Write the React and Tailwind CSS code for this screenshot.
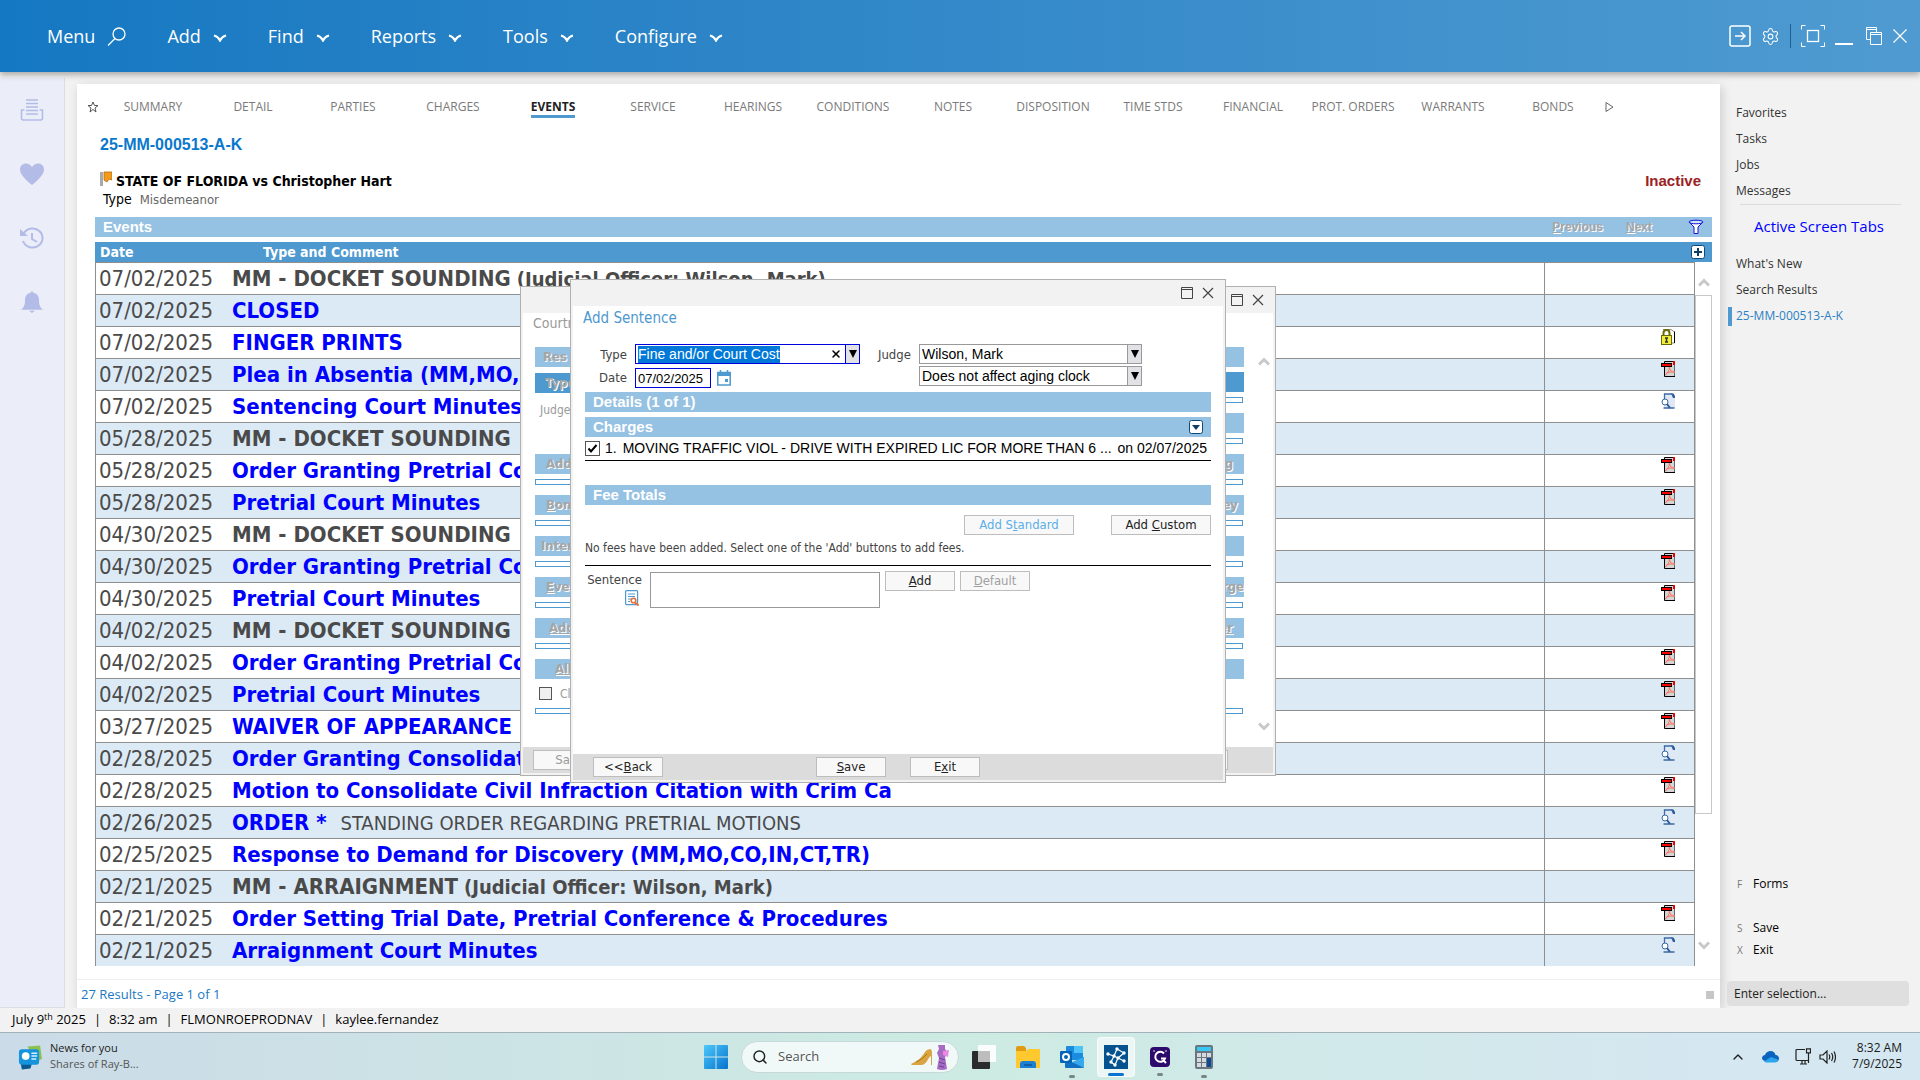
import React, { useEffect, useRef } from "react";
import { ChevronUp, Search, Settings, X } from "lucide-react";

const events = [
	{ date: "07/02/2025", text: "MM - DOCKET SOUNDING", officer: "(Judicial Officer: Wilson, Mark)" },
	{ date: "07/02/2025", text: "CLOSED", link: true },
	{ date: "07/02/2025", text: "FINGER PRINTS", link: true, icon: "lock" },
	{ date: "07/02/2025", text: "Plea in Absentia (MM,MO,CO", link: true, icon: "pdf" },
	{ date: "07/02/2025", text: "Sentencing Court Minutes", link: true, icon: "view" },
	{ date: "05/28/2025", text: "MM - DOCKET SOUNDING" },
	{ date: "05/28/2025", text: "Order Granting Pretrial Co", link: true, icon: "pdf" },
	{ date: "05/28/2025", text: "Pretrial Court Minutes", link: true, icon: "pdf" },
	{ date: "04/30/2025", text: "MM - DOCKET SOUNDING" },
	{ date: "04/30/2025", text: "Order Granting Pretrial Co", link: true, icon: "pdf" },
	{ date: "04/30/2025", text: "Pretrial Court Minutes", link: true, icon: "pdf" },
	{ date: "04/02/2025", text: "MM - DOCKET SOUNDING" },
	{ date: "04/02/2025", text: "Order Granting Pretrial Co", link: true, icon: "pdf" },
	{ date: "04/02/2025", text: "Pretrial Court Minutes", link: true, icon: "pdf" },
	{ date: "03/27/2025", text: "WAIVER OF APPEARANCE", link: true, icon: "pdf" },
	{ date: "02/28/2025", text: "Order Granting Consolidat", link: true, icon: "view" },
	{ date: "02/28/2025", text: "Motion to Consolidate Civil Infraction Citation with Crim Ca", link: true, icon: "pdf" },
	{ date: "02/26/2025", text: "ORDER *", link: true, note: "STANDING ORDER REGARDING PRETRIAL MOTIONS", icon: "view" },
	{ date: "02/25/2025", text: "Response to Demand for Discovery (MM,MO,CO,IN,CT,TR)", link: true, icon: "pdf" },
	{ date: "02/21/2025", text: "MM - ARRAIGNMENT", officer: "(Judicial Officer: Wilson, Mark)" },
	{ date: "02/21/2025", text: "Order Setting Trial Date, Pretrial Conference & Procedures", link: true, icon: "pdf" },
	{ date: "02/21/2025", text: "Arraignment Court Minutes", link: true, icon: "view" },
];

const tabs = [
	"SUMMARY", "DETAIL", "PARTIES", "CHARGES", "EVENTS", "SERVICE", "HEARINGS", "CONDITIONS",
	"NOTES", "DISPOSITION", "TIME STDS", "FINANCIAL", "PROT. ORDERS", "WARRANTS", "BONDS",
];

function PdfIcon() {
	return (
		<svg width="14" height="16" viewBox="0 0 14 16" aria-label="PDF">
			<path d="M3.5 .5H14V15.5H3.5z" fill="#d4d4d4" stroke="#000" />
			<rect x="12" y="0" width="2" height="4" fill="#e00" />
			<rect x=".5" y="2.5" width="10" height="3" fill="#f00" stroke="#000" />
			<path d="M4 14c3-2 4.500-5 4.500-8 0 3 2 5.500 5.500 5M5 12.500c3-1.500 6-2 9-1.500" fill="none" stroke="#ff6f61" />
		</svg>
	);
}

function ViewIcon() {
	return (
		<svg width="14" height="16" viewBox="0 0 14 16" aria-label="View">
			<path d="M3 1h9l2 3v11H3z" fill="#dfe8f4" />
			<path d="M3.500 6V1h8M2.500 15h11" fill="none" stroke="#3c6aa3" strokeWidth="1.300" />
			<path d="M10 .5h2.500L14 3v2h-2z" fill="#2d5f9e" />
			<circle cx="4" cy="9" r="3" fill="#fff" stroke="#3c6aa3" />
			<path d="M6 11l3 4" stroke="#2d5f9e" strokeWidth="2" />
		</svg>
	);
}

function LockIcon() {
	return (
		<svg width="14" height="16" viewBox="0 0 14 16" aria-label="Locked">
			<path d="M2 .5h8l3.500 2.500v11H8" fill="#fff" stroke="#888" />
			<path d="M13.500 2.500V14" stroke="#000" />
			<path d="M2.500 7V4a3 3 0 0 1 6 0v3" fill="none" stroke="#6b6b00" strokeWidth="2" />
			<rect x=".5" y="6.500" width="10" height="9" fill="#f1ee3b" stroke="#6b6b00" />
			<path d="M4 9h3M5.500 9v4M4 13h3" stroke="#333" strokeWidth="1.500" />
		</svg>
	);
}

const rowIcons = { pdf: <PdfIcon />, view: <ViewIcon />, lock: <LockIcon /> };

function MenuButton({ label }) {
	return (
		<button className="flex items-center gap-3">
			{label}
			<svg width="14" height="8" viewBox="0 0 14 8" fill="none" stroke="#fff" strokeWidth="2.200" className="mt-1">
				<path d="M1 1.500Q5 2.500 7 6.500Q9 2.500 13 1.500" />
			</svg>
		</button>
	);
}

function TopBar() {
	return (
		<header className="relative z-10 flex h-[72px] shrink-0 items-center justify-between bg-linear-to-r from-[#1478c2] via-[#3389c9] to-[#4f9bd1] pr-3 pl-[47px] text-[18px] text-white shadow-[0_3px_6px_rgba(0,0,0,0.3)]">
			<nav className="flex items-center gap-[41px]">
				<button className="flex items-center gap-3">
					Menu
					<svg width="19" height="19" viewBox="0 0 19 19" fill="none" stroke="#fff" strokeWidth="1.300">
						<circle cx="12" cy="7" r="6" />
						<path d="M8 11.500L1 18.500" />
					</svg>
				</button>
				<MenuButton label="Add" />
				<MenuButton label="Find" />
				<MenuButton label="Reports" />
				<MenuButton label="Tools" />
				<MenuButton label="Configure" />
			</nav>
			<div className="flex items-center gap-[10px]">
				<button aria-label="Sign out">
					<svg width="22" height="22" viewBox="0 0 22 22" fill="none" stroke="#fff" strokeWidth="1.500">
						<rect x="1" y="1" width="20" height="20" rx="2" />
						<path d="M6 11h10M12 7l4 4-4 4" />
					</svg>
				</button>
				<button aria-label="Settings">
					<Settings size={19} strokeWidth={1.3} />
				</button>
				<div className="h-6 w-px bg-[#1c5f99]" />
				<button aria-label="Full screen">
					<svg width="24" height="22" viewBox="0 0 24 22" fill="none" stroke="#fff">
						<path d="M.5 4.500v-4h4M19.500.5h4v4M23.500 17.500v4h-4M4.500 21.500h-4v-4" />
						<rect x="6.500" y="5.500" width="11" height="11" strokeWidth="1.300" />
					</svg>
				</button>
				<button aria-label="Minimize">
					<svg width="18" height="18" viewBox="0 0 18 18">
						<rect y="16" width="18" height="2" fill="#fff" />
					</svg>
				</button>
				<button aria-label="Restore" className="ml-[3px]">
					<svg width="16" height="18" viewBox="0 0 16 18" fill="none" stroke="#fff">
						<path d="M4 12.500H.5V.5h10V5M.5 2.500h10" />
						<path d="M4.500 5.500h11v12h-11zM4.500 7.500h11" />
					</svg>
				</button>
				<button aria-label="Close">
					<svg width="16" height="16" viewBox="0 0 16 16" stroke="#fff" strokeWidth="1.200">
						<path d="M1.500 1.500l13 13M14.500 1.500l-13 13" />
					</svg>
				</button>
			</div>
		</header>
	);
}

function LeftRail() {
	return (
		<aside className="mt-[6px] flex w-[65px] shrink-0 flex-col items-center gap-[42px] border-r border-b border-[#dcdde3] bg-[#ebeef8] pt-[21px] text-[#b3bce6]">
			<button aria-label="Documents">
				<svg width="24" height="22" viewBox="0 0 24 22" fill="none" stroke="currentColor" strokeWidth="1.600">
					<path d="M6 1h12M6 4.500h12M6 8h12M6 11.500h12M6 15h12" />
					<path d="M4.500 11H1.500v8q0 2 2 2h17q2 0 2-2v-8h-3" />
				</svg>
			</button>
			<button aria-label="Favorites">
				<svg width="26" height="22" viewBox="0 0 26 22" fill="currentColor">
					<path d="M13 22C8 18 1 12 1 6.500 1 3 3.500.5 7 .5c2.500 0 4.500 1.200 6 3.500C14.500 1.700 16.500.5 19 .5c3.500 0 6 2.500 6 6C25 12 18 18 13 22z" />
				</svg>
			</button>
			<button aria-label="History">
				<svg width="26" height="22" viewBox="0 0 26 22" fill="none" stroke="currentColor" strokeWidth="2">
					<path d="M5 6a10 9.500 0 1 1-1 8" />
					<path d="M1 2v7h8z" fill="currentColor" stroke="none" />
					<path d="M13 6v6l5 3" />
				</svg>
			</button>
			<button aria-label="Notifications">
				<svg width="22" height="22" viewBox="0 0 22 24" preserveAspectRatio="none" fill="currentColor">
					<path d="M11 0l1.500 2c4 1 5.500 4 5.500 8 0 6 1.500 8 4 10.500H0C2.500 18 4 16 4 10c0-4 1.500-7 5.500-8zM8 21.500h6l-3 2.500z" />
				</svg>
			</button>
		</aside>
	);
}

function ScrollArrow({ down }) {
	return (
		<svg width="12" height="9" viewBox="0 0 12 9" fill="none" stroke="#c8c8c8" strokeWidth="3">
			<path d={down ? "M1 1.500L6 6.500L11 1.500" : "M1 7.500L6 2.500L11 7.500"} />
		</svg>
	);
}

function EventsTable() {
	return (
		<table className="w-full table-fixed border-separate border-spacing-0 font-['DejaVu_Sans_Condensed','DejaVu_Sans',sans-serif] text-[#4a4a4a]">
			<thead>
				<tr className="h-5 bg-[#4e99cf] text-left text-[14px] leading-5 text-white">
					<th className="w-[137px] p-0 pl-[5px]">Date</th>
					<th className="p-0 pl-[31px]">Type and Comment</th>
					<th className="w-[151px] p-0" />
					<th className="w-[17px] p-0">
						<button aria-label="Add event" className="relative -left-1 block">
							<PlusBox />
						</button>
					</th>
				</tr>
			</thead>
			<tbody>
				{events.map((e, i) => (
					<tr key={i} className={i % 2 ? "h-8 bg-[#dceaf6]" : "h-8 bg-white"}>
						<td className="border-t border-l border-[#8f8f8f] p-0 pl-[3px] text-[22px] leading-7">{e.date}</td>
						<td className="overflow-hidden border-t border-[#8f8f8f] p-0 text-[22px] leading-7 whitespace-nowrap">
							{e.link ? (
								<a href="#event" className="font-bold text-[#0000ff]">{e.text}</a>
							) : (
								<b>{e.text}</b>
							)}
							{e.officer && <b className="ml-[6px] text-[20px]">{e.officer}</b>}
							{e.note && <span className="ml-[14px] text-[20px]">{e.note}</span>}
						</td>
						<td className="border-x border-t border-[#8f8f8f] p-0 align-top">
							<div className="flex justify-end pt-[2px] pr-[19px]">{rowIcons[e.icon]}</div>
						</td>
						{i === 0 && (
							<td rowSpan={events.length} className="h-px bg-white p-0 align-top">
								<div className="flex h-full flex-col items-center justify-between">
									<div className="flex h-[552px] w-full flex-col items-center">
										<div className="flex h-[33px] items-center pt-2">
											<ScrollArrow />
										</div>
										<div className="w-full flex-1 border border-[#c8c8c8]" />
									</div>
									<div className="pb-4">
										<ScrollArrow down />
									</div>
								</div>
							</td>
						)}
					</tr>
				))}
			</tbody>
		</table>
	);
}

function PlusBox() {
	return (
		<svg width="14" height="14" viewBox="0 0 14 14">
			<rect x=".5" y=".5" width="13" height="13" rx="2" fill="#fff" stroke="#0d4a7a" />
			<path d="M7 3v8M3 7h8" stroke="#0d3e68" strokeWidth="2" />
		</svg>
	);
}

function CaseCard() {
	return (
		<main className="mt-3 ml-3 flex min-w-0 flex-1 flex-col overflow-hidden bg-white shadow-[2px_3px_10px_rgba(0,0,0,0.16)]">
			<nav className="flex h-[46px] items-center pl-[10px] text-[12px] text-[#7a7a7a]">
				<svg width="12" height="12" viewBox="0 0 24 24" fill="none" stroke="#555" strokeWidth="2">
					<path d="M12 2l3 7h7l-6 5 2 8-6-5-6 5 2-8-6-5h7z" />
				</svg>
				<div className="ml-1 flex">
					{tabs.map((t) => (
						<a key={t} href="#tab" className="flex w-[100px] justify-center whitespace-nowrap">
							{t === "EVENTS" ? (
								<span className="border-b-[3px] border-[#4e99cf] pt-[3px] leading-4 font-bold text-[#222]">{t}</span>
							) : (
								<span className="pt-[3px] leading-4">{t}</span>
							)}
						</a>
					))}
				</div>
				<svg width="9" height="12" viewBox="0 0 9 12" fill="none" stroke="#666" className="ml-[2px]">
					<path d="M1 1.500L8 6L1 10.500z" />
				</svg>
			</nav>
			<section className="flex flex-1 flex-col pr-2 pl-[18px]">
				<h1 className="mt-[5px] pl-[5px] font-['Liberation_Sans',sans-serif] text-[16px] leading-5 font-bold text-[#0a78cc]">
					25-MM-000513-A-K
				</h1>
				<div className="mt-4 flex justify-between pr-[11px] pl-[5px]">
					<div>
						<div className="flex gap-1 font-['DejaVu_Sans_Condensed','DejaVu_Sans',sans-serif] text-[14px] leading-5 font-bold text-black">
							<svg width="12" height="15" viewBox="0 0 12 15">
								<rect x="0" y="1" width="3" height="14" fill="#a9a9a9" />
								<path d="M4 1h8v8l-3-1-2 3-3-2z" fill="#f29a1c" stroke="#b56a08" strokeWidth=".8" />
							</svg>
							STATE OF FLORIDA vs Christopher Hart
						</div>
						<div className="flex items-baseline gap-2 pl-[3px] font-['DejaVu_Sans_Condensed','DejaVu_Sans',sans-serif] text-[14px] leading-4">
							<span className="text-black">Type</span>
							<span className="text-[13px] text-[#666]">Misdemeanor</span>
						</div>
					</div>
					<div className="font-['Liberation_Sans',sans-serif] text-[15px] leading-5 font-bold text-[#9c2222]">Inactive</div>
				</div>
				<div className="mt-[9px] flex h-5 items-center justify-between bg-[#95c1e3] pr-2 pl-2 font-['Liberation_Sans',sans-serif] text-[15px] font-bold text-white">
					<h2>Events</h2>
					<div className="flex items-center text-[12px] text-[#a6a6a6] [text-shadow:1px_1px_0_#fff]">
						<span className="mr-[23px]"><u>P</u>revious</span>
						<span className="mr-9"><u>N</u>ext</span>
						<svg width="16" height="16" viewBox="0 0 16 16" fill="#fff" stroke="#1414d8">
							<path d="M1 3l5 5v6.500h4V8l5-5z" />
							<ellipse cx="8" cy="3" rx="7" ry="1.800" fill="#cfe6f6" />
						</svg>
					</div>
				</div>
				<div className="mt-[5px] flex-1 overflow-hidden">
					<EventsTable />
				</div>
			</section>
			<footer className="flex h-[29px] items-center justify-between border-t border-[#eee] pt-px pr-[6px] pl-1 text-[13px] text-[#1b78c2]">
				<span>27 Results - Page 1 of 1</span>
				<span className="h-2 w-2 bg-[#c6c6c6]" />
			</footer>
		</main>
	);
}

function RightRail() {
	return (
		<aside className="flex w-[200px] shrink-0 flex-col pt-7 pr-[11px] pl-[7px] text-[12px] text-[#333]">
			<nav className="flex flex-col pl-[9px] leading-[26px]">
				<a href="#favorites">Favorites</a>
				<a href="#tasks">Tasks</a>
				<a href="#jobs">Jobs</a>
				<a href="#messages">Messages</a>
			</nav>
			<hr className="mr-2 ml-[13px] border-[#dcdcdc]" />
			<h2 className="mt-[9px] ml-[27px] text-[15px] leading-6 whitespace-nowrap text-[#0000ff]">Active Screen Tabs</h2>
			<nav className="mt-[13px] flex flex-col leading-[26px]">
				<a href="#new" className="pl-[9px]">What's New</a>
				<a href="#results" className="pl-[9px]">Search Results</a>
				<a href="#case" className="flex items-center gap-1 pl-px text-[#2a80c4]">
					<span className="h-[19px] w-1 bg-[#4e99cf]" />
					25-MM-000513-A-K
				</a>
			</nav>
			<div className="mt-auto flex flex-col pl-[10px] leading-[22px] text-black">
				<a href="#forms" className="flex"><span className="w-4 text-[10px] text-[#777]">F</span>Forms</a>
				<a href="#save" className="mt-[22px] flex"><span className="w-4 text-[10px] text-[#777]">S</span>Save</a>
				<a href="#exit" className="flex"><span className="w-4 text-[10px] text-[#777]">X</span>Exit</a>
			</div>
			<input
				aria-label="Enter selection"
				placeholder="Enter selection..."
				className="mt-5 mb-[2px] h-[25px] w-full rounded bg-[#dfdfdf] px-[7px] text-[12px] placeholder:text-[#222]"
			/>
		</aside>
	);
}

function WindowBar() {
	return (
		<div className="flex h-[26px] items-center justify-end gap-[9px] bg-[#f2f2f2] pr-[11px]">
			<button aria-label="Maximize">
				<svg width="12" height="12" viewBox="0 0 12 12" fill="none" stroke="#444">
					<path d="M.5.5h11v11H.5zM.5 2.500h11" />
				</svg>
			</button>
			<button aria-label="Close window">
				<svg width="12" height="12" viewBox="0 0 12 12" stroke="#444" strokeWidth="1.200">
					<path d="M1 1l10 10M11 1L1 11" />
				</svg>
			</button>
		</div>
	);
}

function Bar({ children, dark }) {
	return (
		<div
			className={
				dark
					? "flex h-5 items-center bg-[#4e99cf] text-[#a6a6a6] [text-shadow:1px_1px_0_#fff]"
					: "flex h-5 items-center bg-[#95c1e3] text-[#a6a6a6] [text-shadow:1px_1px_0_#fff]"
			}>
			{children}
		</div>
	);
}

function Strip() {
	return <div className="mr-px h-[6px] border border-[#4e99cf] bg-white" />;
}

function CourtroomDialog() {
	return (
		<div className="absolute top-[286px] left-[520px] z-20 flex h-[490px] w-[756px] flex-col border border-[#b0b0b0] bg-white font-['DejaVu_Sans_Condensed','DejaVu_Sans',sans-serif] text-[13px] text-[#9a9a9a]">
			<WindowBar />
			<div className="flex flex-1 flex-col border-x-2 border-[#f2f2f2] pl-3">
				<h2 className="-ml-[2px] h-[34px] text-[14px] leading-5">Courtr</h2>
				<div className="flex flex-1 justify-between">
					<div className="flex w-20 flex-col font-bold">
						<Bar><span className="pl-2">Res</span></Bar>
						<div className="mt-[6px]"><Bar dark><span className="pl-[10px]">Type</span></Bar></div>
						<div className="mt-2 h-[53px] pl-[5px] text-[12px] font-normal">Judge</div>
						<div className="flex flex-col gap-[5px]">
							<Bar><span className="pl-[11px]">Add</span></Bar>
							<Strip />
							<div className="mt-[5px]"><Bar><span className="pl-[11px]"><u>B</u>on</span></Bar></div>
							<Strip />
							<div className="mt-[5px]"><Bar><span className="pl-[6px]">Inter</span></Bar></div>
							<Strip />
							<div className="mt-[5px]"><Bar><span className="pl-[11px]"><u>E</u>ve</span></Bar></div>
							<Strip />
							<div className="mt-[5px]"><Bar><span className="pl-[14px]"><u>Add</u></span></Bar></div>
							<Strip />
							<div className="mt-[5px]"><Bar><span className="pl-5"><u>All</u></span></Bar></div>
						</div>
						<label className="mt-[8px] flex h-[13px] items-center gap-2 pl-1 text-[12px] font-normal">
							<input type="checkbox" className="h-[13px] w-[13px] shrink-0 appearance-none border border-[#555] bg-[#f0f0f0]" />
							Cle
						</label>
						<div className="mt-2"><Strip /></div>
					</div>
					<div className="ml-auto flex w-20 flex-col gap-[5px] text-right font-bold">
						<Bar />
						<Bar dark />
						<Strip />
						<div className="mt-[5px]"><Bar /></div>
						<Strip />
						<div className="mt-[5px]"><Bar><span className="w-full pr-[11px]">g</span></Bar></div>
						<Strip />
						<div className="mt-[5px]"><Bar><span className="w-full pr-[6px]">ey</span></Bar></div>
						<Strip />
						<div className="mt-[5px]"><Bar /></div>
						<Strip />
						<div className="mt-[5px]"><Bar><span className="w-full">r<u>g</u>e</span></Bar></div>
						<Strip />
						<div className="mt-[5px]"><Bar><span className="w-full pr-[11px]"><u>er</u></span></Bar></div>
						<Strip />
						<div className="mt-[5px]"><Bar /></div>
						<div className="mt-6"><Strip /></div>
					</div>
					<div className="mt-[10px] mr-[3px] mb-4 ml-[14px] flex flex-col justify-between">
						<ScrollArrow />
						<ScrollArrow down />
					</div>
				</div>
			</div>
			<div className="flex h-7 shrink-0 justify-between border-x-2 border-b-2 border-[#f2f2f2] bg-[#dcdcdc] pt-[3px] pr-[45px] pl-[10px]">
				<button className="h-5 w-[70px] border border-[#bdbdbd] bg-[#f8f8f8] pr-1 text-[13px] leading-[18px]">Sav</button>
				<button aria-label="Close courtroom" className="h-5 w-[70px] border border-[#bdbdbd] bg-[#f8f8f8]" />
			</div>
		</div>
	);
}

function SectionBar({ title, children }) {
	return (
		<div className="flex h-5 items-center justify-between bg-[#95c1e3] px-2 font-['Liberation_Sans',sans-serif] text-[15px] font-bold text-white">
			<h3>{title}</h3>
			{children}
		</div>
	);
}

function PlainSelect({ id, label, value }) {
	return (
		<div className="relative flex h-5 w-[223px] border border-[#999] bg-white">
			<select
				id={id}
				aria-label={label}
				defaultValue={value}
				className="w-full appearance-none pt-px pl-[2px] font-['Liberation_Sans',sans-serif] text-[14px] leading-[17px] text-black">
				<option>{value}</option>
			</select>
			<span className="pointer-events-none absolute top-0 right-0 flex h-full w-[14px] items-center justify-center border-l border-[#999] bg-[#e1e1e6]">
				<DownTriangle />
			</span>
		</div>
	);
}

function DownTriangle() {
	return (
		<svg width="8" height="8" viewBox="0 0 8 8">
			<path d="M0 0h8L4 8z" fill="#000" />
		</svg>
	);
}

function FormButton({ children, className }) {
	return (
		<button className={`h-5 border border-[#bdbdbd] bg-[#f8f8f8] text-[13px] leading-[18px] ${className}`}>
			{children}
		</button>
	);
}

function SentenceDialog() {
	const typeRef = useRef(null);

	useEffect(() => {
		typeRef.current.focus();
		typeRef.current.select();
	}, []);

	return (
		<div className="absolute top-[279px] left-[570px] z-30 flex h-[504px] w-[656px] flex-col border border-[#b0b0b0] bg-white font-['DejaVu_Sans_Condensed','DejaVu_Sans',sans-serif] text-[13px] text-[#444]">
			<WindowBar />
			<div className="flex flex-1 flex-col border-x-2 border-[#f2f2f2] px-3">
				<h2 className="mt-1 -ml-[2px] h-[34px] text-[15px] leading-4 text-[#4e99cf]">Add Sentence</h2>
				<div className="flex h-[43px]">
					<div className="grid grid-cols-[42px_auto] gap-x-2 gap-y-[3px]">
						<label htmlFor="type" className="text-right leading-[21px]">Type</label>
						<div className="flex h-5 w-[225px] items-center border border-[#0000dd] bg-white">
							<input
								id="type"
								ref={typeRef}
								defaultValue="Fine and/or Court Cost"
								className="min-w-0 flex-1 pt-px pl-[2px] font-['Liberation_Sans',sans-serif] text-[14px] leading-[17px] text-black outline-none selection:bg-[#0078d7] selection:text-white"
							/>
							<button aria-label="Clear type" className="mr-[3px]">
								<X size={12} color="#000" strokeWidth={3} />
							</button>
							<button aria-label="Open type list" className="flex h-full w-[14px] items-center justify-center border-l border-[#0000dd] bg-[#e1e1e6]">
								<DownTriangle />
							</button>
						</div>
						<label htmlFor="date" className="text-right leading-5">Date</label>
						<div className="flex items-center gap-[6px]">
							<input
								id="date"
								defaultValue="07/02/2025"
								className="h-5 w-[76px] border border-[#0000dd] pl-[2px] font-['Liberation_Sans',sans-serif] text-[13px] text-black"
							/>
							<button aria-label="Pick date">
								<svg width="14" height="16" viewBox="0 0 14 16" fill="none" stroke="#4e99cf" strokeWidth="1.500">
									<path d="M.8 2.500h12.400v12.500H.8z" />
									<path d="M0 2h14v4H0z" fill="#4e99cf" stroke="none" />
									<path d="M3.500 0v3M10.500 0v3" />
									<path d="M8 9h3v3H8z" fill="#4e99cf" stroke="none" />
								</svg>
							</button>
						</div>
					</div>
					<div className="ml-[18px] flex">
						<label htmlFor="judge" className="w-[41px] leading-[21px]">Judge</label>
						<div className="flex flex-col gap-[2px]">
							<PlainSelect id="judge" value="Wilson, Mark" />
							<PlainSelect label="Aging clock" value="Does not affect aging clock" />
						</div>
					</div>
				</div>
				<div className="mt-[5px]"><SectionBar title="Details (1 of 1)" /></div>
				<div className="mt-[5px]">
					<SectionBar title="Charges">
						<button aria-label="Toggle charges">
							<svg width="14" height="14" viewBox="0 0 14 14">
								<rect x=".5" y=".5" width="13" height="13" rx="2" fill="#fff" stroke="#0d4a7a" />
								<path d="M3 5h8L7 10z" fill="#0d3e68" />
							</svg>
						</button>
					</SectionBar>
				</div>
				<div className="flex h-6 items-center border-b border-black pr-1 font-['Liberation_Sans',sans-serif] text-[14px] text-black">
					<label className="flex items-center">
						<span className="relative mr-[5px] flex">
							<input type="checkbox" defaultChecked className="h-[15px] w-[15px] appearance-none border border-[#555] bg-white" />
							<svg width="15" height="15" viewBox="0 0 15 15" className="pointer-events-none absolute inset-0" fill="none" stroke="#000" strokeWidth="2">
								<path d="M3.500 7.500L6 10.500L11.500 4" />
							</svg>
						</span>
						<span className="mr-[6px]">1.</span>
						MOVING TRAFFIC VIOL - DRIVE WITH EXPIRED LIC FOR MORE THAN 6 ...
					</label>
					<span className="ml-auto whitespace-nowrap">on 02/07/2025</span>
				</div>
				<div className="mt-6"><SectionBar title="Fee Totals" /></div>
				<div className="mt-[10px] flex justify-end gap-[37px]">
					<FormButton className="w-[110px] text-[#5aaeea]">Add S<u>t</u>andard</FormButton>
					<FormButton className="w-[100px] text-[#222]">Add <u>C</u>ustom</FormButton>
				</div>
				<p className="mt-1 h-[27px] border-b border-black text-[12px] leading-[18px]">No fees have been added. Select one of the 'Add' buttons to add fees.</p>
				<div className="mt-[5px] flex">
					<div className="flex w-[65px] flex-col items-end pr-2">
						<label htmlFor="sentence" className="leading-[18px]">Sentence</label>
						<svg width="14" height="16" viewBox="0 0 14 16" fill="none" className="mt-px mr-[3px]">
							<rect x=".6" y=".6" width="12" height="14" rx="1" stroke="#4e99cf" strokeWidth="1.200" />
							<path d="M3 4h7M3 6.500h7M3 9h3M3 11.500h2" stroke="#4e99cf" />
							<circle cx="8.500" cy="10.500" r="2.300" stroke="#e8703a" strokeWidth="1.600" />
							<path d="M10 12.500l3.500 3" stroke="#e8703a" strokeWidth="2" />
						</svg>
					</div>
					<textarea id="sentence" className="mt-px h-9 w-[230px] resize-none border border-[#999]" />
					<FormButton className="ml-[5px] w-[70px] text-[#222]"><u>A</u>dd</FormButton>
					<FormButton className="ml-[5px] w-[70px] text-[#a0a0a0]"><u>D</u>efault</FormButton>
				</div>
			</div>
			<div className="flex h-7 border-x-2 border-b-2 border-[#f2f2f2] bg-[#dcdcdc] pt-[3px] pl-5">
				<FormButton className="w-[70px] text-[#222]">&lt;&lt;<u>B</u>ack</FormButton>
				<FormButton className="ml-[153px] w-[70px] text-[#222]"><u>S</u>ave</FormButton>
				<FormButton className="ml-6 w-[70px] text-[#222]">E<u>x</u>it</FormButton>
			</div>
		</div>
	);
}

function StatusBar() {
	return (
		<div className="flex h-6 shrink-0 items-center gap-2 bg-[#f2f2f2] pl-3 text-[13px] text-black">
			<span>July 9<sup className="text-[9px]">th</sup> 2025</span>
			<span>|</span>
			<span>8:32 am</span>
			<span>|</span>
			<span>FLMONROEPRODNAV</span>
			<span>|</span>
			<span>kaylee.fernandez</span>
		</div>
	);
}

function RunDot() {
	return <span className="absolute -bottom-[9px] h-[3px] w-[6px] rounded-full bg-[#76858a]" />;
}

function Taskbar() {
	return (
		<footer className="grid h-12 shrink-0 grid-cols-[1fr_auto_1fr] items-center border-t border-[#a3b1b8] bg-linear-to-r from-[#cbdbe8] from-0% via-[#cdebe2] via-50% to-[#d5e7f1] to-90% text-[11px]">
			<button className="flex items-center gap-2 pl-[18px] text-left leading-4">
				<svg width="24" height="26" viewBox="0 0 25 26">
					<path d="M10 2l13-1 2 14-8 3z" fill="#8cc152" />
					<path d="M1 10l15 4-3 11-9 1z" fill="#0b5a8f" />
					<rect x="1" y="5" width="21" height="16" rx="3" fill="#1593dd" />
					<circle cx="8" cy="12" r="4" fill="#fff" />
					<path d="M14 9h6M14 12h6M14 15h5" stroke="#d6f1ff" strokeWidth="1.500" />
				</svg>
				<span className="pb-[2px]">
					<span className="block text-[#1c1c1c]">News for you</span>
					<span className="block text-[#555]">Shares of Ray-B...</span>
				</span>
			</button>
			<div className="flex items-center">
				<button aria-label="Start">
					<svg width="24" height="24" viewBox="0 0 24 24">
						<defs>
							<linearGradient id="win" x1="0" y1="0" x2="1" y2="1">
								<stop offset="0" stopColor="#4cc8fa" />
								<stop offset="1" stopColor="#0673cf" />
							</linearGradient>
						</defs>
						<path d="M0 1q0-1 1-1h10.500v11.500H0zM12.500 0H23q1 0 1 1v10.500H12.500zM0 12.500h11.500V24H1q-1 0-1-1zM12.500 12.500H24V23q0 1-1 1H12.500z" fill="url(#win)" />
					</svg>
				</button>
				<label className="ml-[13px] flex h-8 w-[218px] items-center rounded-full border border-[#c6d8d8] bg-[#f0f9f8] pr-2 pl-[10px]">
					<Search size={16} strokeWidth={2.2} color="#222" />
					<input aria-label="Search" placeholder="Search" className="ml-[10px] w-[110px] text-[13px] placeholder:text-[#555]" />
					<svg width="40" height="26" viewBox="0 0 40 26" className="ml-auto">
						<path d="M1 20C8 17 12 13 15 8c1-2 4-3 6-3l1 3v13h-1v-9c-3 1-4 9-10 9H3q-2 0-2-1z" fill="#d9a441" />
						<path d="M6 18c5-2 8-5 11-8" stroke="#a97614" fill="none" />
						<path d="M28 1h7v4l3 4-3 4 2 12q-5 2-10 0l2-11-2-5 2-4z" fill="#a86bc4" />
						<path d="M33 7l6-1-1 7-5-2z" fill="#e78ae0" />
						<path d="M29 14l6 2M29 18l6 2M29 22l5 1" stroke="#6b3f96" />
					</svg>
				</label>
				<div className="ml-[13px] flex items-center gap-5">
					<button aria-label="Task view">
						<svg width="24" height="24" viewBox="0 0 24 24">
							<rect x="0" y="6" width="18" height="18" rx="1" fill="#2b2b2b" />
							<rect x="6" y="0" width="18" height="17" rx="1" fill="#fff" fillOpacity=".9" />
							<rect x="6" y="6" width="12" height="11" fill="#bdbdbd" />
						</svg>
					</button>
					<button aria-label="File Explorer">
						<svg width="24" height="24" viewBox="0 0 24 24">
							<path d="M0 3q0-2 2-2h6l2 2v5H0z" fill="#e09b12" />
							<path d="M1 6h9l2-2h11q1 0 1 1v17q0 1-1 1H1q-1 0-1-1V7q0-1 1-1z" fill="#fdc92f" />
							<path d="M4 23v-4q0-3 3-3h10q3 0 3 3v4z" fill="#1c7fd1" />
							<path d="M8 20h8" stroke="#0a5697" strokeWidth="1.500" />
						</svg>
					</button>
					<button aria-label="Outlook" className="relative flex justify-center">
						<svg width="24" height="24" viewBox="0 0 24 24">
							<rect x="6" y="1" width="17" height="14" rx="1" fill="#1b8be0" />
							<path d="M14 1h9v7h-9z" fill="#4fc3f7" />
							<path d="M5 13l9 5 10-6v10q0 1-1 1H6q-1 0-1-1z" fill="#1170c4" />
							<path d="M24 12v11L12 17z" fill="#35a9ec" />
							<rect x="0" y="6" width="12" height="12" rx="1" fill="#0364b8" />
							<circle cx="6" cy="12" r="3" fill="none" stroke="#fff" strokeWidth="2" />
						</svg>
						<RunDot />
					</button>
					<button aria-label="Case manager" className="relative -mx-[7px] flex h-[40px] w-[38px] items-center justify-center rounded border border-white/60 bg-white/60">
						<svg width="24" height="24" viewBox="0 0 24 24">
							<rect width="24" height="24" fill="#04528f" />
							<path d="M4 9l6 2 3-7M10 11l4 2 6-5M14 13l6 3M10 11l-3 6 4 3 3-7M13 4l7 4" stroke="#fff" strokeWidth="1.200" fill="none" />
							<g fill="#fff">
								<circle cx="4" cy="9" r="1.700" />
								<circle cx="10" cy="11" r="1.700" />
								<circle cx="13" cy="4" r="1.700" />
								<circle cx="20" cy="8" r="1.700" />
								<circle cx="14" cy="13" r="1.700" />
								<circle cx="20" cy="16" r="1.700" />
								<circle cx="7" cy="17" r="1.700" />
								<circle cx="11" cy="20" r="1.700" />
							</g>
						</svg>
						<span className="absolute bottom-0 h-[3px] w-4 rounded-full bg-[#0a73d1]" />
					</button>
					<button aria-label="Capture" className="relative flex w-6 justify-center">
						<svg width="20" height="20" viewBox="0 0 20 20">
							<rect width="20" height="20" rx="4" fill="#2b0a6b" />
							<path d="M14 6.500a5 5 0 1 0 1 5h-4M13 13l3 3" stroke="#fff" strokeWidth="2" fill="none" />
							<circle cx="4" cy="4" r=".8" fill="#fff" />
							<circle cx="16" cy="4" r=".8" fill="#fff" />
						</svg>
						<RunDot />
					</button>
					<button aria-label="Calculator" className="relative flex w-6 justify-center">
						<svg width="18" height="24" viewBox="0 0 18 24">
							<rect width="18" height="24" rx="2" fill="#6a7580" />
							<rect x="2" y="2" width="14" height="4" fill="#37c8f3" />
							<path d="M2 8h4v4H2zM7 8h4v4H7zM12 8h4v4h-4zM2 13h4v4H2zM7 13h4v4H7zM2 18h4v4H2zM7 18h4v4H7z" fill="#d5dade" />
							<path d="M12 13h4v9h-4z" fill="#0e4a94" />
						</svg>
						<RunDot />
					</button>
				</div>
			</div>
			<div className="flex items-center justify-end pr-[18px] text-[12px] text-[#1c1c1c]">
				<ChevronUp size={16} strokeWidth={2} />
				<svg width="17" height="12" viewBox="0 0 17 12" className="ml-4">
					<path d="M4 10C1 10 0 8.500 0 7c0-2 2-3 3-3 1-3 3.500-4 5.500-4C11 0 13 1.500 13.500 4 16 4 17 6 17 7.500 17 10 15 11 13.500 11H4z" fill="#0a64bd" />
					<path d="M2 10.500L9 6l7 2.500c0 2-1.500 3-3 3H4z" fill="#2ba4ee" />
				</svg>
				<svg width="16" height="17" viewBox="0 0 16 17" fill="none" stroke="#222" strokeWidth="1.200" className="ml-4">
					<path d="M10 1.500H2q-1 0-1 1v9q0 1 1 1h11M5 16h7M7 12.500V16M10 12.500V16" />
					<path d="M11.500.8h4v4h-4zM13.500 5v10" />
				</svg>
				<svg width="17" height="14" viewBox="0 0 17 14" fill="none" stroke="#222" strokeWidth="1.200" className="ml-2">
					<path d="M1 5h3l4-4v12L4 9H1zM10 4.500q1.500 2.500 0 5M12.500 3q2.500 4 0 8M15 1.500q3 5.500 0 11" />
				</svg>
				<div className="ml-4 pb-px text-right leading-4">
					<div>8:32 AM</div>
					<div>7/9/2025</div>
				</div>
			</div>
		</footer>
	);
}

export default function App() {
	return (
		<div className="relative flex h-screen flex-col overflow-hidden bg-[#f2f2f2] font-['Open_Sans','Noto_Sans',sans-serif]">
			<TopBar />
			<div className="flex min-h-0 flex-1">
				<LeftRail />
				<CaseCard />
				<RightRail />
			</div>
			<StatusBar />
			<Taskbar />
			<CourtroomDialog />
			<SentenceDialog />
		</div>
	);
}
